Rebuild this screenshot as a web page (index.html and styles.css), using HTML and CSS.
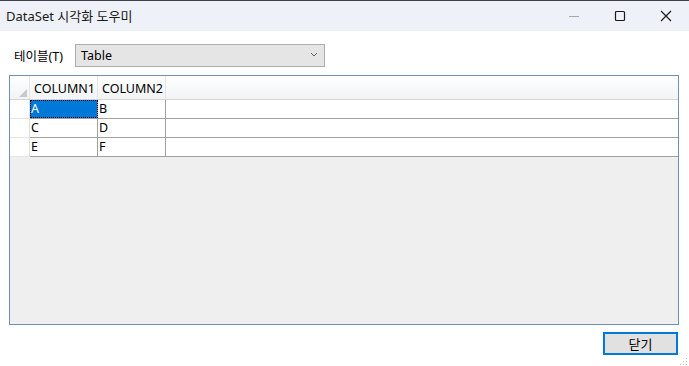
FILE: index.html
```html
<!DOCTYPE html>
<html lang="ko">
<head>
<meta charset="utf-8">
<link rel="stylesheet" href="styles.css">
</head>
<body>
<div class="window">
  <div class="titlebar">
    <div class="title">DataSet 시각화 도우미</div>
    <div class="controls">
      <span class="ctl"><svg width="12" height="12" viewBox="0 0 12 12"><path d="M1 6.5h10" stroke="#a8a8a8" stroke-width="1"/></svg></span>
      <span class="ctl"><svg width="12" height="12" viewBox="0 0 12 12"><rect x="1.5" y="1.5" width="9" height="9" rx="1" fill="none" stroke="#1a1a1a" stroke-width="1.2"/></svg></span>
      <span class="ctl"><svg width="12" height="12" viewBox="0 0 12 12"><path d="M1 1L11 11M11 1L1 11" stroke="#1a1a1a" stroke-width="1.2"/></svg></span>
    </div>
  </div>
  <div class="body">
    <div class="toprow">
      <span class="label">테이블(T)</span>
      <div class="combo">
        <span>Table</span>
        <svg class="chev" width="8" height="5" viewBox="0 0 8 5"><path d="M1 1l3 3 3-3" fill="none" stroke="#606060" stroke-width="1"/></svg>
      </div>
    </div>
    <div class="grid">
      <div class="row head">
        <div class="rh corner"><svg width="8" height="8" viewBox="0 0 8 8"><path d="M8 0V8H0z" fill="#c9c9c9"/></svg></div>
        <div class="ch">COLUMN1</div>
        <div class="ch">COLUMN2</div>
        <div class="fill"></div>
      </div>
      <div class="row">
        <div class="rh"></div>
        <div class="cell sel">A</div>
        <div class="cell">B</div>
        <div class="fill"></div>
      </div>
      <div class="row">
        <div class="rh"></div>
        <div class="cell">C</div>
        <div class="cell">D</div>
        <div class="fill"></div>
      </div>
      <div class="row">
        <div class="rh"></div>
        <div class="cell">E</div>
        <div class="cell">F</div>
        <div class="fill"></div>
      </div>
    </div>
    <div class="btnrow">
      <button class="btn">닫기</button>
    </div>
  </div>
  <div class="grip"><svg width="10" height="10" viewBox="0 0 10 10" fill="#b8b8b8"><rect x="8" y="0" width="1" height="1"/><rect x="8" y="3" width="1" height="1"/><rect x="5" y="3" width="1" height="1"/><rect x="8" y="6" width="1" height="1"/><rect x="5" y="6" width="1" height="1"/><rect x="2" y="6" width="1" height="1"/></svg></div>
</div>
</body>
</html>
```

FILE: styles.css
```css
* { box-sizing: border-box; }
html, body { margin: 0; padding: 0; }
body {
  width: 689px;
  height: 366px;
  overflow: hidden;
  font-family: "Noto Sans", "Noto Sans CJK KR", sans-serif;
  font-size: 12.5px;
  color: #000;
  background: #fff;
}
.window {
  position: relative;
  width: 689px;
  height: 366px;
  display: flex;
  flex-direction: column;
  background: #fff;
}
.titlebar {
  height: 31px;
  background: #eff1f8;
  border-top: 1px solid #3c3f44;
  display: flex;
  align-items: center;
  justify-content: space-between;
}
.title {
  padding-left: 6px;
  font-size: 13px;
  color: #1a1a1a;
  padding-bottom: 1px;
}
.controls {
  display: flex;
  height: 100%;
}
.ctl {
  width: 46px;
  display: flex;
  align-items: center;
  justify-content: center;
}
.body {
  flex: 1;
  display: flex;
  flex-direction: column;
  padding: 13px 10px 0 9px;
}
.toprow {
  display: flex;
  align-items: center;
  height: 23px;
}
.label {
  margin-left: 5px;
  width: 61px;
  color: #000;
}
.combo {
  width: 250px;
  height: 23px;
  background: #e5e5e5;
  border: 1px solid #adadad;
  display: flex;
  align-items: center;
  justify-content: space-between;
  padding: 0 6px 0 5px;
}
.chev { margin-bottom: 2px; }
.grid {
  margin-top: 8px;
  height: 250px;
  border: 1px solid #6f8fb5;
  background: #efefef;
  display: flex;
  flex-direction: column;
}
.row {
  display: flex;
  height: 19px;
  background: #fff;
  border-bottom: 1px solid #a0a0a0;
}
.row.head {
  height: 24px;
  background: linear-gradient(#ffffff, #f1f3f6);
  border-bottom: 1px solid #d5d5d5;
}
.rh {
  width: 20px;
  flex: none;
  background: #fff;
  border-right: 1px solid #e0e0e0;
  margin-bottom: -1px;
  border-bottom: 1px solid #e4e4e4;
}
.row.head .rh { background: transparent; border-bottom: none; margin-bottom: 0; border-right: 1px solid #e3e5e8; }
.corner {
  display: flex;
  align-items: flex-end;
  justify-content: flex-end;
  padding: 0 2px 2px 0;
}
.ch {
  width: 68px;
  flex: none;
  padding: 2px 0 0 4px;
  display: flex;
  align-items: center;
  border-right: 1px solid #e3e5e8;
  color: #000;
  white-space: nowrap;
}
.cell {
  width: 68px;
  flex: none;
  padding: 1px 0 0 1px;
  display: flex;
  align-items: center;
  border-right: 1px solid #a0a0a0;
  line-height: 1;
}
.cell.sel {
  background: #0078d7;
  color: #fff;
  outline: 1px dotted #000;
  outline-offset: -1px;
}
.fill { flex: 1; }
.btnrow {
  display: flex;
  justify-content: flex-end;
  padding-top: 7px;
  padding-right: 1px;
}
.btn {
  width: 75px;
  height: 23px;
  background: #e1e1e1;
  border: 2px solid #0078d7;
  font-family: "Noto Sans CJK KR", sans-serif;
  font-size: 13px;
  color: #000;
  padding: 0;
  display: flex;
  align-items: center;
  justify-content: center;
}
.grip {
  position: absolute;
  right: 1px;
  bottom: 1px;
  width: 10px;
  height: 10px;
}
```
